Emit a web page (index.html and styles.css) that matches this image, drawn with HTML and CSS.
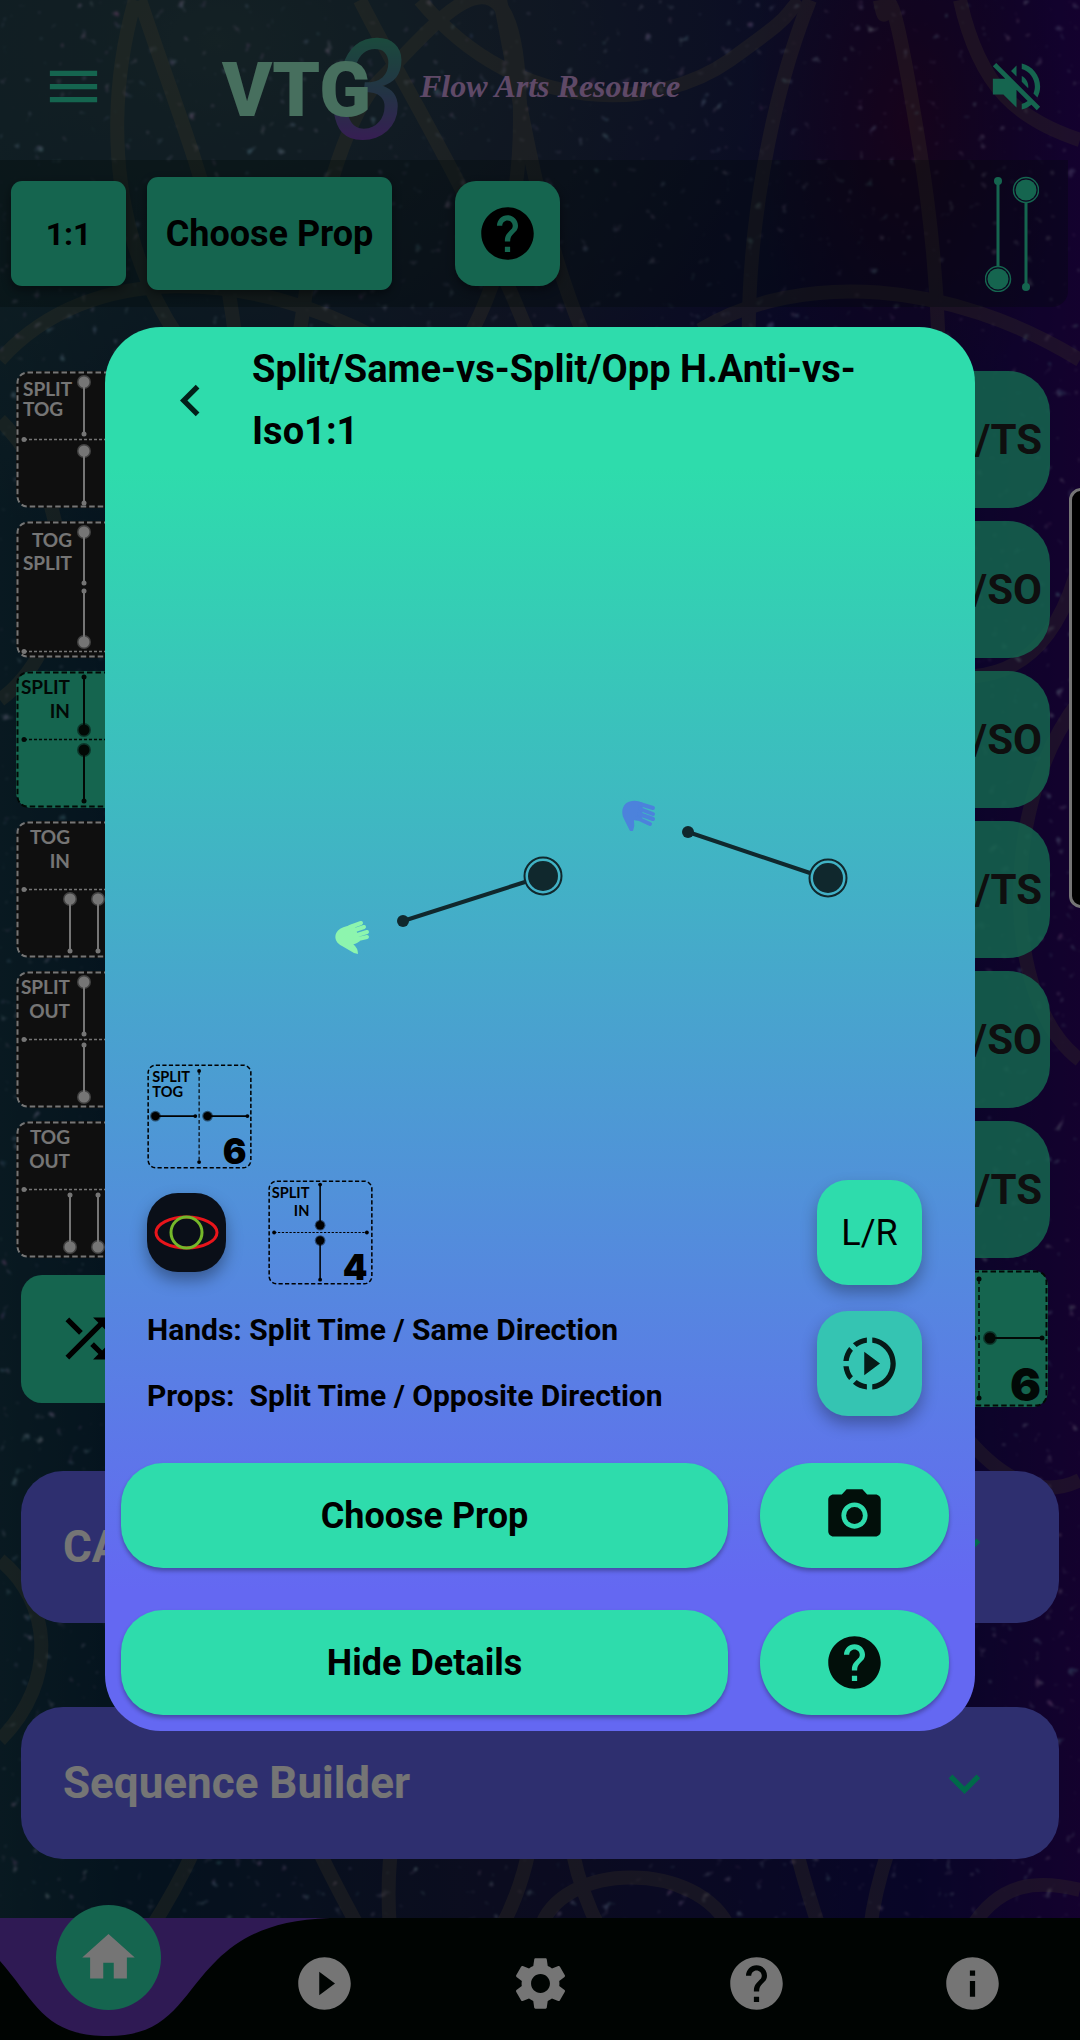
FILE: index.html
```html
<!DOCTYPE html>
<html lang="en">
<head>
<meta charset="utf-8">
<meta name="viewport" content="width=device-width, initial-scale=1">
<title>VTG3 Flow Arts Resource</title>
<link rel="stylesheet" href="styles.css">
</head>
<body>
<svg class="defs" aria-hidden="true">
  <defs>
    <symbol id="i-menu" viewBox="0 0 24 24"><path d="M3 18h18v-2H3v2zm0-5h18v-2H3v2zm0-7v2h18V6H3z"/></symbol>
    <symbol id="i-mute" viewBox="0 0 24 24"><path d="M16.5 12c0-1.77-1.02-3.29-2.5-4.03v2.21l2.45 2.45c.03-.2.05-.41.05-.63zm2.5 0c0 .94-.2 1.82-.54 2.64l1.51 1.51C20.63 14.91 21 13.5 21 12c0-4.28-2.99-7.86-7-8.77v2.06c2.89.86 5 3.54 5 6.71zM4.27 3L3 4.27 7.73 9H3v6h4l5 5v-6.73l4.25 4.25c-.67.52-1.42.93-2.25 1.18v2.06c1.38-.31 2.63-.95 3.69-1.81L19.73 21 21 19.73l-9-9L4.27 3zM12 4L9.91 6.09 12 8.18V4z"/></symbol>
    <symbol id="i-help" viewBox="0 0 24 24"><path d="M12 2C6.48 2 2 6.48 2 12s4.48 10 10 10 10-4.48 10-10S17.52 2 12 2zm1 17h-2v-2h2v2zm2.07-7.75l-.9.92C13.45 12.9 13 13.5 13 15h-2v-.5c0-1.1.45-2.1 1.17-2.83l1.24-1.26c.37-.36.59-.86.59-1.41 0-1.1-.9-2-2-2s-2 .9-2 2H8c0-2.21 1.79-4 4-4s4 1.79 4 4c0 .88-.36 1.68-.93 2.25z"/></symbol>
    <symbol id="i-back" viewBox="0 0 24 24"><path d="M15.41 7.41L14 6l-6 6 6 6 1.41-1.41L10.83 12z"/></symbol>
    <symbol id="i-down" viewBox="0 0 24 24"><path d="M16.59 8.59L12 13.17 7.41 8.59 6 10l6 6 6-6z"/></symbol>
    <symbol id="i-shuffle" viewBox="0 0 24 24"><path d="M10.59 9.17L5.41 4 4 5.41l5.17 5.17 1.42-1.41zM14.5 4l2.04 2.04L4 18.59 5.41 20 17.96 7.46 20 9.5V4h-5.5zm.33 9.41l-1.41 1.41 3.13 3.13L14.5 20H20v-5.5l-2.04 2.04-3.13-3.13z"/></symbol>
    <symbol id="i-slow" viewBox="0 0 24 24"><path d="M10 7.5v9l6-4.5zM11 4.07V2.05c-2.01.2-3.84 1-5.32 2.21L7.1 5.69c1.11-.86 2.44-1.44 3.9-1.62zM5.69 7.1L4.26 5.68C3.05 7.16 2.25 8.99 2.05 11h2.02c.18-1.46.76-2.79 1.62-3.9zM4.07 13H2.05c.2 2.01 1 3.84 2.21 5.32l1.43-1.43c-.86-1.1-1.44-2.43-1.62-3.89zm1.61 6.74C7.16 20.95 9 21.75 11 21.95v-2.02c-1.46-.18-2.79-.76-3.9-1.62l-1.42 1.43zM22 12c0 5.16-3.92 9.42-8.95 9.95v-2.02C16.97 19.41 20 16.05 20 12s-3.03-7.41-6.95-7.93V2.05C18.08 2.58 22 6.84 22 12z"/></symbol>
    <symbol id="i-camera" viewBox="0 0 24 24"><circle cx="12" cy="12" r="3.2"/><path d="M9 2L7.17 4H4c-1.1 0-2 .9-2 2v12c0 1.1.9 2 2 2h16c1.1 0 2-.9 2-2V6c0-1.1-.9-2-2-2h-3.17L15 2H9zm3 15c-2.76 0-5-2.24-5-5s2.24-5 5-5 5 2.24 5 5-2.24 5-5 5z"/></symbol>
    <symbol id="i-home" viewBox="0 0 24 24"><path d="M10 20v-6h4v6h5v-8h3L12 3 2 12h3v8z"/></symbol>
    <symbol id="i-play" viewBox="0 0 24 24"><path d="M12 2C6.48 2 2 6.48 2 12s4.48 10 10 10 10-4.48 10-10S17.52 2 12 2zm-2 14.5v-9l6 4.5-6 4.5z"/></symbol>
    <symbol id="i-settings" viewBox="0 0 24 24"><path d="M19.14 12.94c.04-.3.06-.61.06-.94 0-.32-.02-.64-.07-.94l2.03-1.58c.18-.14.23-.41.12-.61l-1.92-3.32c-.12-.22-.37-.29-.59-.22l-2.39.96c-.5-.38-1.03-.7-1.62-.94l-.36-2.54c-.04-.24-.24-.41-.48-.41h-3.84c-.24 0-.43.17-.47.41l-.36 2.54c-.59.24-1.13.57-1.62.94l-2.39-.96c-.22-.08-.47 0-.59.22L2.74 8.87c-.12.21-.08.47.12.61l2.03 1.58c-.05.3-.09.63-.09.94s.02.64.07.94l-2.03 1.58c-.18.14-.23.41-.12.61l1.92 3.32c.12.22.37.29.59.22l2.39-.96c.5.38 1.03.7 1.62.94l.36 2.54c.05.24.24.41.48.41h3.84c.24 0 .44-.17.47-.41l.36-2.54c.59-.24 1.13-.56 1.62-.94l2.39.96c.22.08.47 0 .59-.22l1.92-3.32c.12-.22.07-.47-.12-.61l-2.01-1.58zM12 15.6c-1.98 0-3.6-1.62-3.6-3.6s1.62-3.6 3.6-3.6 3.6 1.62 3.6 3.6-1.62 3.6-3.6 3.6z"/></symbol>
    <symbol id="i-info" viewBox="0 0 24 24"><path d="M12 2C6.48 2 2 6.48 2 12s4.48 10 10 10 10-4.48 10-10S17.52 2 12 2zm1 15h-2v-6h2v6zm0-8h-2V7h2v2z"/></symbol>

    <symbol id="frame" viewBox="0 0 137 137">
      <rect x="1.5" y="1.5" width="134" height="134" rx="10" fill="none" stroke="currentColor" stroke-width="2" stroke-dasharray="5.5 3"/>
    </symbol>
    <symbol id="axis" viewBox="0 0 137 137">
      <path d="M8 68.500H129" stroke="currentColor" stroke-width="1.500" stroke-dasharray="3 2"/>
      <circle cx="8" cy="68.500" r="2.500"/><circle cx="129" cy="68.500" r="2.500"/>
    </symbol>
    <!-- poi head: solid ball in a soft ring -->
    <symbol id="ball" viewBox="-8 -8 16 16">
      <circle r="7" opacity=".5"/><circle r="5.500"/>
    </symbol>
  </defs>
</svg>

<div class="app">
  <svg class="sky" aria-hidden="true">
    <filter id="stars" x="0" y="0" width="100%" height="100%">
      <feTurbulence type="fractalNoise" baseFrequency=".09" numOctaves="2" seed="7"/>
      <feColorMatrix values="0 1.2 0 0 0  0 0 1.2 0 0  0.6 0 0.6 0 0.2  6 0 0 0 -4.1"/>
      <feGaussianBlur stdDeviation="1"/>
    </filter>
    <rect width="100%" height="100%" filter="url(#stars)"/>
  </svg>
  <svg class="ornament" viewBox="0 0 1080 2040" preserveAspectRatio="xMidYMid slice" aria-hidden="true">
    <g fill="none" stroke="#8a7a50" stroke-width="14">
      <path d="M135 0C90 160 130 330 260 420S520 330 520 120 440 20 380 80 270 420 300 560"/>
      <path d="M140 0C190 150 240 260 240 420"/>
      <path d="M360 0C420 120 560 330 590 560"/>
      <path d="M420 0C520 120 660 110 730 60S780 20 800 0"/>
      <path d="M500 0C540 200 560 420 780 590S1060 640 1080 560"/>
      <path d="M810 0C730 200 720 520 830 590S960 400 920 150 890 60 880 0"/>
      <path d="M0 360C90 260 250 270 380 340M700 330C800 270 950 280 1080 360"/>
      <path d="M960 0C980 90 1020 120 1080 140"/>
      <path d="M0 700C80 640 80 500 0 420M1080 700C1000 800 1000 1000 1080 1060"/>
      <path d="M960 1430C1000 1480 1040 1500 1080 1480M0 1560C50 1600 60 1680 0 1740"/>
      <path d="M150 1930C220 1820 240 1740 200 1660M360 1930C300 1820 260 1740 280 1600M390 1930C380 1800 420 1720 520 1660M500 1930C560 1820 520 1720 560 1640"/>
      <path d="M540 1930C560 1860 700 1860 730 1930M600 1930C560 1850 570 1800 560 1740M820 1930C790 1840 770 1760 780 1650M870 1930C880 1840 930 1760 960 1660M970 1930C1000 1880 1040 1880 1080 1890"/>
    </g>
  </svg>

  <header class="topbar">
    <button class="icon-btn" aria-label="Menu"><svg class="icon"><use href="#i-menu"/></svg></button>
    <div class="brand">
      <svg class="logo" viewBox="0 0 200 130" role="img" aria-label="VTG3">
        <defs>
          <linearGradient id="three" x1="0" y1="0" x2="0" y2="1">
            <stop offset="0.200" stop-color="#3aa584"/><stop offset="0.550" stop-color="#4d6f96"/><stop offset="0.850" stop-color="#7a3fb8"/>
          </linearGradient>
        </defs>
        <text class="logo-three" x="118" y="117" fill="url(#three)">3</text>
        <text class="logo-vtg" x="12" y="94">VTG</text>
      </svg>
      <span class="tagline">Flow Arts Resource</span>
    </div>
    <button class="icon-btn" aria-label="Unmute"><svg class="icon"><use href="#i-mute"/></svg></button>
  </header>

  <div class="toolbar">
    <button class="chip chip-ratio">1:1</button>
    <button class="chip chip-prop">Choose Prop</button>
    <button class="chip chip-help" aria-label="Help"><svg class="icon"><use href="#i-help"/></svg></button>
    <svg class="pois" viewBox="985 175 54 116" aria-hidden="true">
      <path d="M998 180V266M1026 201V286" stroke="currentColor" stroke-width="3"/>
      <circle cx="998" cy="180" r="4"/><circle cx="1026" cy="286" r="4"/>
      <circle cx="998" cy="278" r="10.500"/><circle cx="1026" cy="189" r="10.500"/>
      <g fill="none" stroke="currentColor" stroke-width="1.500"><circle cx="998" cy="278" r="12.500"/><circle cx="1026" cy="189" r="12.500"/></g>
    </svg>
  </div>

  <main>
    <div class="moves">
      <div class="move">
        <button class="tile" aria-label="Split Tog">
          <svg viewBox="0 0 137 137"><use href="#frame"/><use href="#axis"/>
            <g class="rods"><path d="M68 11V63M68 80V132"/></g>
            <use href="#ball" x="60" y="3" width="16" height="16"/><circle cx="68" cy="63" r="2.500"/><use href="#ball" x="60" y="72" width="16" height="16"/><circle cx="68" cy="132" r="2.500"/>
            <text x="7" y="25">SPLIT</text><text x="7" y="45">TOG</text></svg>
        </button>
        <button class="pair">ST/TS</button>
      </div>
      <div class="move">
        <button class="tile" aria-label="Tog Split">
          <svg viewBox="0 0 137 137"><use href="#frame"/><use href="#axis" y="62"/>
            <g class="rods"><path d="M68 11V62M68 70V121"/></g>
            <use href="#ball" x="60" y="3" width="16" height="16"/><circle cx="68" cy="62" r="2.500"/><circle cx="68" cy="70" r="2.500"/><use href="#ball" x="60" y="113" width="16" height="16"/>
            <text class="end" x="56" y="26">TOG</text><text class="end" x="56" y="49">SPLIT</text></svg>
        </button>
        <button class="pair">TS/SO</button>
      </div>
      <div class="move">
        <button class="tile tile-on" aria-label="Split In">
          <svg viewBox="0 0 137 137"><use href="#frame"/><use href="#axis"/>
            <g class="rods"><path d="M68 6V59M68 79V130"/></g>
            <circle cx="68" cy="6" r="2.500"/><use href="#ball" x="60" y="51" width="16" height="16"/><use href="#ball" x="60" y="71" width="16" height="16"/><circle cx="68" cy="130" r="2.500"/>
            <text class="end" x="54" y="23">SPLIT</text><text class="end" x="54" y="47">IN</text></svg>
        </button>
        <button class="pair">SS/SO</button>
      </div>
      <div class="move">
        <button class="tile" aria-label="Tog In">
          <svg viewBox="0 0 137 137"><use href="#frame"/><use href="#axis"/>
            <g class="rods"><path d="M54 78V130M82 78V130"/></g>
            <use href="#ball" x="46" y="70" width="16" height="16"/><circle cx="54" cy="130" r="2.500"/><use href="#ball" x="74" y="70" width="16" height="16"/><circle cx="82" cy="130" r="2.500"/>
            <text class="end" x="54" y="23">TOG</text><text class="end" x="54" y="47">IN</text></svg>
        </button>
        <button class="pair">SO/TS</button>
      </div>
      <div class="move">
        <button class="tile" aria-label="Split Out">
          <svg viewBox="0 0 137 137"><use href="#frame"/><use href="#axis"/>
            <g class="rods"><path d="M68 11V63M68 74V126"/></g>
            <use href="#ball" x="60" y="3" width="16" height="16"/><circle cx="68" cy="63" r="2.500"/><circle cx="68" cy="74" r="2.500"/><use href="#ball" x="60" y="118" width="16" height="16"/>
            <text class="end" x="54" y="23">SPLIT</text><text class="end" x="54" y="47">OUT</text></svg>
        </button>
        <button class="pair">TO/SO</button>
      </div>
      <div class="move">
        <button class="tile" aria-label="Tog Out">
          <svg viewBox="0 0 137 137"><use href="#frame"/><use href="#axis"/>
            <g class="rods"><path d="M54 74V126M82 74V126"/></g>
            <circle cx="54" cy="74" r="2.500"/><use href="#ball" x="46" y="118" width="16" height="16"/><circle cx="82" cy="74" r="2.500"/><use href="#ball" x="74" y="118" width="16" height="16"/>
            <text class="end" x="54" y="23">TOG</text><text class="end" x="54" y="47">OUT</text></svg>
        </button>
        <button class="pair">TO/TS</button>
      </div>
    </div>

    <div class="pick">
      <button class="shuffle" aria-label="Shuffle"><svg class="icon"><use href="#i-shuffle"/></svg></button>
      <button class="tile tile-on" aria-label="Number 6">
        <svg viewBox="0 0 137 137"><use href="#frame"/>
          <path d="M68 9V128" stroke="currentColor" stroke-width="1.500" stroke-dasharray="5 3"/>
          <g class="rods"><path d="M11 68H63M79 68H131"/></g>
          <circle cx="68" cy="9" r="2.500"/><circle cx="68" cy="128" r="2.500"/>
          <use href="#ball" x="3" y="60" width="16" height="16"/><circle cx="63" cy="68" r="2.500"/><use href="#ball" x="71" y="60" width="16" height="16"/><circle cx="131" cy="68" r="2.500"/>
          <text class="num end" x="130" y="131">6</text></svg>
      </button>
    </div>

    <div class="panels">
      <button class="panel" aria-expanded="false"><span>CAPs</span><svg class="icon"><use href="#i-down"/></svg></button>
      <button class="panel" aria-expanded="false"><span>Sequence Builder</span><svg class="icon"><use href="#i-down"/></svg></button>
    </div>
  </main>

  <nav class="tabs" aria-label="Main">
    <svg class="tab-wave" viewBox="0 0 330 122" aria-hidden="true"><path d="M0 0H330C270 2 240 20 217 42C180 78 172 118 108 118C44 118 36 84 0 43Z"/></svg>
    <a class="tab" href="#home" aria-label="Home"><span class="tab-active"><svg class="icon"><use href="#i-home"/></svg></span></a>
    <a class="tab" href="#play" aria-label="Play"><svg class="icon"><use href="#i-play"/></svg></a>
    <a class="tab" href="#settings" aria-label="Settings"><svg class="icon"><use href="#i-settings"/></svg></a>
    <a class="tab" href="#help" aria-label="Help"><svg class="icon"><use href="#i-help"/></svg></a>
    <a class="tab" href="#info" aria-label="Info"><svg class="icon"><use href="#i-info"/></svg></a>
  </nav>

  <div class="drawer"></div>

  <div class="backdrop">
    <section class="dialog" role="dialog" aria-modal="true" aria-labelledby="move-title">
      <div class="dialog-head">
        <button class="icon-btn" aria-label="Back"><svg class="icon"><use href="#i-back"/></svg></button>
        <h1 id="move-title">Split/Same-vs-Split/Opp H.Anti-vs-<wbr>Iso1:1</h1>
      </div>

      <svg class="stage" viewBox="121 462 838 602" role="img" aria-label="Move animation">
        <g fill="#10282d" stroke="#10282d">
          <path d="M403 921L525 882M688 832L810 873" stroke-width="4"/>
          <g stroke="none"><circle cx="403" cy="921" r="6"/><circle cx="688" cy="832" r="6"/><circle cx="543" cy="876" r="15"/><circle cx="828" cy="878" r="15"/></g>
          <g fill="none" stroke-width="2"><circle cx="543" cy="876" r="18.500"/><circle cx="828" cy="878" r="18.500"/></g>
        </g>
        <g fill="#8df5ae" stroke="#8df5ae" stroke-linecap="round">
          <path stroke="none" d="M344 927L354 924L360 941Q354 945 353 944Q358 948 358 954L354 953L342 946C332 941 334 930 344 927Z"/>
          <path d="M350 927L361 923M352 931L364 927M354 936L367 932M354 940L367 937" stroke-width="4"/>
        </g>
        <g fill="#4c82dc" stroke="#4c82dc" stroke-linecap="round">
          <path stroke="none" d="M632 801Q637 800 643 803L642 820Q636 821 634 820Q635 826 633 831L630 831L624 819C620 811 623 802 632 801Z"/>
          <path d="M640 804L653 808M640 809L653 814M639 814L653 819M637 818L650 824" stroke-width="4"/>
        </g>
      </svg>

      <div class="details">
        <div class="facts">
          <svg class="glyph" viewBox="0 0 137 137" role="img" aria-label="Split Tog 6"><use href="#frame"/>
            <path d="M68 9V128" stroke="currentColor" stroke-width="1.500" stroke-dasharray="5 3"/>
            <g class="rods"><path d="M11 68H63M79 68H131"/></g>
            <circle cx="68" cy="9" r="2.500"/><circle cx="68" cy="128" r="2.500"/>
            <use href="#ball" x="3" y="60" width="16" height="16"/><circle cx="63" cy="68" r="2.500"/><use href="#ball" x="71" y="60" width="16" height="16"/><circle cx="131" cy="68" r="2.500"/>
            <text x="7" y="24">SPLIT</text><text x="7" y="43">TOG</text><text class="num end" x="130" y="131">6</text></svg>
          <div class="glyph-row">
            <button class="orbit" aria-label="Show path">
              <svg viewBox="0 0 79 79"><g fill="none" stroke-width="3"><ellipse cx="39.500" cy="39.500" rx="30.500" ry="15.500" stroke="#e8151b"/><circle cx="39.500" cy="39.500" r="15.500" stroke="#75b82a"/></g></svg>
            </button>
            <svg class="glyph" viewBox="0 0 137 137" role="img" aria-label="Split In 4"><use href="#frame"/><use href="#axis"/>
              <g class="rods"><path d="M68 6V59M68 79V130"/></g>
              <circle cx="68" cy="6" r="2.500"/><use href="#ball" x="60" y="51" width="16" height="16"/><use href="#ball" x="60" y="71" width="16" height="16"/><circle cx="68" cy="130" r="2.500"/>
              <text class="end" x="54" y="23">SPLIT</text><text class="end" x="54" y="47">IN</text><text class="num end" x="130" y="131">4</text></svg>
          </div>
          <div class="lines">
            <p>Hands: Split Time / Same Direction</p>
            <p>Props:&nbsp; Split Time / Opposite Direction</p>
          </div>
        </div>
        <div class="side">
          <button class="round">L/R</button>
          <button class="round round-dim" aria-label="Slow motion"><svg class="icon"><use href="#i-slow"/></svg></button>
        </div>
      </div>

      <div class="actions">
        <button class="action">Choose Prop</button>
        <button class="action action-icon" aria-label="Take picture"><svg class="icon"><use href="#i-camera"/></svg></button>
        <button class="action">Hide Details</button>
        <button class="action action-icon" aria-label="Help"><svg class="icon"><use href="#i-help"/></svg></button>
      </div>
    </section>
  </div>
</div>
</body>
</html>
```

FILE: styles.css
```css
:root {
  --green: #2edcac;
  --indigo: #6468f2;
  --ink: #000;
  --font: Roboto, "Liberation Sans", sans-serif;
}

* { box-sizing: border-box; }

body {
  margin: 0;
  background: #0b1030;
  color: var(--ink);
  font-family: var(--font);
  font-weight: 700;
}

button {
  margin: 0;
  padding: 0;
  border: 0;
  background: none;
  color: inherit;
  font: inherit;
  cursor: pointer;
}

h1, p { margin: 0; }

svg { display: block; fill: currentColor; }

.defs { position: absolute; width: 0; height: 0; }

.icon { width: 63px; height: 63px; flex: none; }

.icon-btn { flex: none; }

/* night-sky page behind everything */
.app {
  position: relative;
  display: flex;
  flex-direction: column;
  min-height: 100vh;
  overflow: hidden;
  background:
    radial-gradient(ellipse 160px 300px at 84% 6%, #32083c, transparent),
    radial-gradient(ellipse 700px 500px at 20% 2%, #2c4850, transparent),
    linear-gradient(90deg, #143848 0%, #0b2a42 12%, #191c44 45%, #120d56 85%, #2c0464 100%);
}

.sky, .ornament {
  position: absolute;
  inset: 0;
  width: 100%;
  height: 100%;
}

.sky { opacity: .5; }
.ornament { opacity: .26; }

.topbar, .toolbar, main, .tabs { position: relative; }

.topbar {
  display: flex;
  align-items: center;
  height: 160px;
  padding: 13px 32px 0 42px;
  color: var(--green);
}

.brand {
  display: flex;
  flex: 1;
  align-items: center;
  gap: 10px;
  margin-left: 105px;
}

.logo { width: 200px; height: 130px; flex: none; overflow: visible; }

.logo-vtg {
  fill: #9cf2cc;
  font: 900 76px Roboto, sans-serif;
}

.logo-three { font: italic 500 140px Lato, sans-serif; }

.tagline {
  color: #cf9fe0;
  font: italic 700 32px "Liberation Serif", serif;
  white-space: nowrap;
}

.toolbar {
  display: flex;
  align-items: center;
  height: 147px;
  margin-right: 12px;
  padding: 0 29px 0 11px;
  border-radius: 0 0 16px 0;
  background: rgba(0, 20, 16, .3);
}

.chip {
  display: flex;
  align-items: center;
  justify-content: center;
  height: 105px;
  border-radius: 11px;
  background: var(--green);
  box-shadow: 0 4px 10px rgba(0, 0, 0, .4);
}

.chip-ratio { width: 115px; font-size: 32px; }
.chip-prop { width: 245px; height: 113px; margin-left: 21px; font-size: 36px; }
.chip-help { width: 105px; margin-left: 63px; border-radius: 21px; }

.pois { width: 54px; height: 116px; margin-left: auto; color: var(--green); }

.moves {
  display: grid;
  gap: 13px;
  margin: 64px 30px 12px 16px;
}

.move { display: flex; gap: 16px; }

.tile {
  flex: none;
  width: 137px;
  height: 137px;
  border-radius: 16px;
  background: #212121;
  color: #fff;
}

.tile svg, .glyph { overflow: visible; }

.tile-on { background: var(--green); color: #06150f; }

.tile text, .glyph text { font: 700 19px Lato, sans-serif; }
.tile .num, .glyph .num { font: 900 46px Inter, sans-serif; }
.end { text-anchor: end; }
.rods { stroke: currentColor; stroke-width: 2; }

.pair {
  flex: 1;
  padding-right: 8px;
  border-radius: 42px;
  background: rgba(46, 220, 172, .85);
  color: #212121;
  font-size: 42px;
  text-align: right;
}

.pick {
  display: flex;
  align-items: center;
  justify-content: space-between;
  gap: 16px;
  margin: 0 32px 64px 21px;
}

.shuffle {
  flex: 1;
  height: 128px;
  padding-left: 34px;
  border-radius: 21px;
  background: var(--green);
}

.panels {
  display: grid;
  gap: 84px;
  margin: 0 21px 59px;
}

.panel {
  display: flex;
  align-items: center;
  justify-content: space-between;
  height: 152px;
  padding: 0 63px 0 42px;
  border-radius: 42px;
  background: var(--indigo);
  color: #fff;
  font-size: 44px;
}

.panel .icon { color: #00e4a0; }

.tabs {
  display: grid;
  grid-template-columns: repeat(5, 1fr);
  height: 122px;
  margin-top: auto;
  background: #010a06;
}

.tab-wave {
  position: absolute;
  left: 0;
  top: 0;
  width: 330px;
  height: 122px;
  color: #673ab7;
}

.tab {
  position: relative;
  display: flex;
  justify-content: center;
  padding-top: 34px;
  color: #fff;
}

/* raised disc that rides over the top edge of the bar */
.tab-active {
  position: absolute;
  top: -13px;
  display: grid;
  place-items: center;
  width: 105px;
  height: 105px;
  border-radius: 50%;
  background: var(--green);
}

.drawer {
  position: absolute;
  top: 488px;
  right: -20px;
  width: 31px;
  height: 420px;
  border: 3px solid #fff;
  border-radius: 12px;
  background: #000;
}

.backdrop {
  position: absolute;
  inset: 0;
  display: flex;
  align-items: center;
  justify-content: center;
  padding: 18px 105px 0;
  background: rgba(0, 0, 0, .54);
}

.dialog {
  flex: 1;
  padding: 11px 16px 16px;
  border-radius: 56px;
  background: linear-gradient(var(--green) 10%, var(--indigo) 90%);
}

.dialog-head {
  display: flex;
  align-items: center;
  gap: 30px;
  padding: 0 56px 0 38px;
  color: #02201a;
}

.dialog-head h1 {
  color: var(--ink);
  font-size: 38px;
  line-height: 62px;
}

.stage { width: 100%; height: auto; }

.details {
  display: flex;
  justify-content: space-between;
  padding: 0 37px 0 26px;
}

.glyph { width: 105px; height: 105px; }

.glyph-row {
  display: flex;
  align-items: center;
  gap: 42px;
  margin: 11px 0 12px;
}

.orbit {
  width: 79px;
  height: 79px;
  border-radius: 31px;
  background: #0a0f18;
  box-shadow: 0 8px 16px rgba(0, 0, 0, .35);
}

.lines { font-size: 30px; line-height: 66px; }

.side {
  display: grid;
  align-content: end;
  gap: 26px;
  padding-bottom: 13px;
}

.round {
  display: grid;
  place-items: center;
  width: 105px;
  height: 105px;
  border-radius: 31px;
  background: var(--green);
  box-shadow: 0 8px 16px rgba(0, 0, 0, .3);
  font-size: 36px;
  font-weight: 400;
}

.round-dim { background: #35c4b2; color: #061a17; }

.actions {
  display: grid;
  grid-template-columns: 1fr 189px;
  gap: 42px 32px;
  margin-top: 34px;
  padding-right: 10px;
}

.action {
  display: grid;
  place-items: center;
  height: 105px;
  border-radius: 42px;
  background: var(--green);
  box-shadow: 0 3px 4px rgba(0, 0, 0, .3);
  font-size: 36px;
}

.action-icon { border-radius: 52px; color: #020f0a; }
```
